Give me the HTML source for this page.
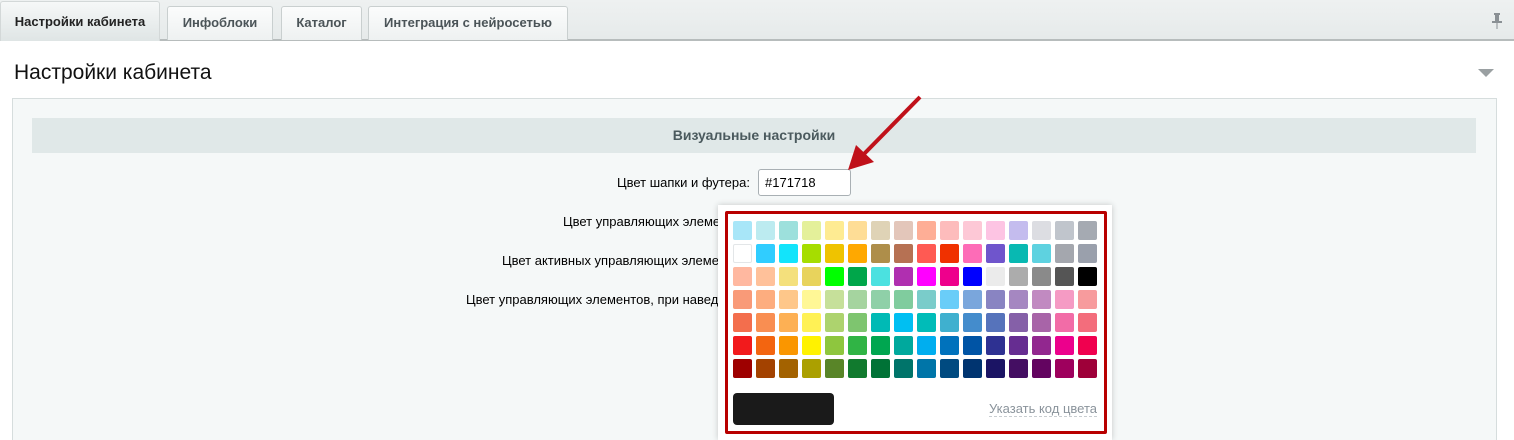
<!DOCTYPE html>
<html style="width:1514px;height:440px;overflow:hidden"><head><meta charset="utf-8"><style>
*{box-sizing:border-box;margin:0;padding:0}
body{width:1514px;height:440px;overflow:hidden;background:#fff;font-family:"Liberation Sans",Arial,sans-serif;position:relative}
.tabbar{position:absolute;left:0;top:0;width:1514px;height:41px;background:linear-gradient(#eef1f1,#e6eaea);border-bottom:2px solid #b7bcbc}
.tab{position:absolute;top:6px;height:34px;border:1px solid #c9cfcf;border-bottom:none;border-radius:3px 3px 0 0;background:linear-gradient(#fbfcfc,#eef1f1);font-size:13px;font-weight:bold;color:#4b5458;text-align:center;line-height:32px}
.tab.act{top:1px;height:40px;background:linear-gradient(#f6f8f8,#dfe5e5);color:#222;line-height:40px;border-color:#d3d8d8}
.title{position:absolute;left:14px;top:61px;font-size:21px;color:#111}
.tri{position:absolute;left:1478px;top:69px;width:0;height:0;border-left:8px solid transparent;border-right:8px solid transparent;border-top:8px solid #9aa0a2}
.panel{position:absolute;left:12px;top:98px;width:1485px;height:342px;background:#f5f8f8;border:1px solid #d6dddd;border-bottom:none}
.hdr{position:absolute;left:32px;top:118px;width:1444px;height:35px;background:#e0e8e8;font-size:14px;font-weight:bold;color:#4b5a5e;text-align:center;line-height:35px}
.lbl{position:absolute;font-size:13px;color:#000;white-space:nowrap}
.inp{position:absolute;left:758px;top:169px;width:93px;height:27px;border:1px solid #a9b0b4;border-radius:3px;background:#fff;font-size:13px;padding-left:6px;line-height:25px}
.pop{position:absolute;left:718px;top:205px;width:394px;height:235px;background:#fff;box-shadow:0 0 6px rgba(0,0,0,.2)}
.red{position:absolute;left:725px;top:211px;width:382px;height:223px;border:3px solid #b80000;border-radius:2px}
.sw{position:absolute;width:19px;height:19px;border-radius:2px}
.blk{position:absolute;left:733px;top:393px;width:101px;height:32px;background:#1a1a1a;border-radius:4px}
.code{position:absolute;right:417px;top:401px;font-size:13px;color:#8a939b;border-bottom:1px dashed #c8cdd1;line-height:15px}
</style></head><body>
<div class="tabbar"></div>
<div class="tab act" style="left:0;width:160px">Настройки кабинета</div>
<div class="tab" style="left:167px;width:106px">Инфоблоки</div>
<div class="tab" style="left:281px;width:81px">Каталог</div>
<div class="tab" style="left:368px;width:200px">Интеграция с нейросетью</div>
<svg style="position:absolute;left:1490px;top:12px" width="14" height="18" viewBox="0 0 14 18"><rect x="4" y="1" width="6" height="2" fill="#8a9094"/><rect x="5" y="3" width="4" height="6" fill="#8a9094"/><rect x="2" y="9" width="10" height="2" fill="#8a9094"/><rect x="6.5" y="11" width="1" height="6" fill="#8a9094"/></svg>
<div class="title">Настройки кабинета</div>
<div class="tri"></div>
<div class="panel"></div>
<div class="hdr">Визуальные настройки</div>
<div class="lbl" style="right:764px;top:175px">Цвет шапки и футера:</div>
<div class="inp">#171718</div>
<div class="lbl" style="left:563px;top:214px">Цвет управляющих элеме</div>
<div class="lbl" style="left:502px;top:253px">Цвет активных управляющих элеме</div>
<div class="lbl" style="left:466px;top:292px">Цвет управляющих элементов, при навед</div>
<div class="pop"></div>
<div class="red"></div>
<div id="g"></div>
<div class="blk"></div>
<div class="code">Указать код цвета</div>
<svg style="position:absolute;left:0;top:0" width="1514" height="440"><line x1="920" y1="97" x2="862" y2="156" stroke="#c0111a" stroke-width="4"/><polygon points="848,170 856,145 874,162" fill="#c0111a"/></svg>
<script>
var c=[
"a8e6f8 bcebf0 9de0dc e4f09a feeb92 fedd96 dfd3b6 e3c6ba feae96 fdbcbc fdc8d6 fdc4e3 c4bcee dcdde2 c0c5cc a5aab2",
"ffffff 30cdff 12e4fb a6dd00 efc300 ffa800 ae8e4a b67153 ff5a53 f03100 fd6cb7 6f55cc 08b9b2 5ed2e0 a4a7ae 9aa0ac",
"ffb8a0 ffc19a f4e07c e8d35c 00ff00 00a64a 4be1e0 b02fb0 ff00ff ee008c 0000ff ebebeb acacac 8a8a8a 555555 000000",
"f99a78 fdad7f fec78a fff796 c6e09a a5d49f 8fd0a8 80cc9e 7accca 6acdf8 7aa6dc 8984c2 a587c1 c18ac1 f59bc4 f79b9d",
"f36e4d f98e52 fdb054 fff155 add36e 7ec56f 00bab5 00bff2 00bcb8 3fb0cf 448ccc 5673bb 8560a8 a864a8 f26ca7 f36d7c",
"f21a1c f36510 fa9600 fff200 8ec63e 30b445 00a650 00a99d 00aeef 0072bc 0054a5 2e3192 662d91 92278f ec008c f0004f",
"9e0000 a34200 a36200 aba000 598528 117a2e 007236 00746a 0075a8 004a80 003470 1b1464 440e62 630460 9e005d 9e0039"];
var h="";
c.forEach(function(r,i){r.split(" ").forEach(function(v,j){h+='<div class="sw" style="left:'+(733+j*23)+'px;top:'+(221+i*23)+'px;background:#'+v+(v=="ffffff"?';border:1px solid #e3e6e8':'')+'"></div>';});});
document.getElementById("g").innerHTML=h;
</script>
</body></html>
